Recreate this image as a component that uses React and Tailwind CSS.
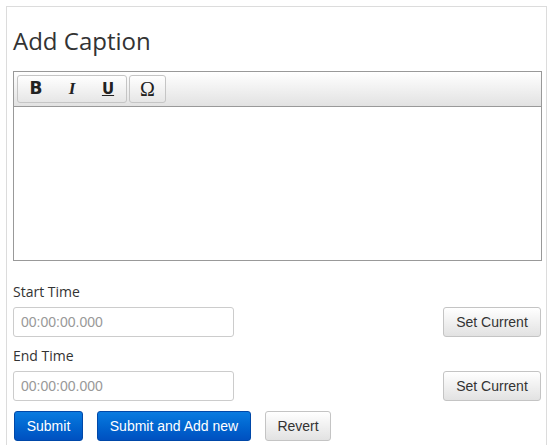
import React from "react";

const grad = "bg-gradient-to-b from-white to-[#e2e2e2]";

export default function App() {
  return (
    <div className="w-[552px] h-[445px] bg-white overflow-hidden">
      <div className="ml-[6px] mt-[6px] w-[541px] h-[460px] border border-[#dcdcdc] border-b-0 pl-[6px] pr-[5px]" style={{ fontFamily: '"Open Sans", sans-serif' }}>
        <h1 className="text-[24px] text-[#333] leading-none mt-[22px] mb-[18px]">Add Caption</h1>
        <div className="w-[529px] h-[190px] border border-[#999] flex flex-col">
          <div className={`h-[35px] border-b border-[#999] ${grad} flex items-center pl-[3px] gap-[2px]`}>
            <div className="flex h-[28px] w-[110px] border border-[#c5c5c5] rounded-[3px] bg-gradient-to-b from-white to-[#e6e6e6]">
              <span className="flex-1 flex items-center justify-center font-bold text-[17px] text-[#222]" style={{ fontFamily: '"DejaVu Sans", sans-serif' }}>B</span>
              <span className="flex-1 flex items-center justify-center italic font-bold text-[17px] text-[#222]" style={{ fontFamily: '"Liberation Serif", serif' }}>I</span>
              <span className="flex-1 flex items-center justify-center text-[15px] font-bold text-[#222] underline" style={{ fontFamily: '"DejaVu Sans", sans-serif' }}>U</span>
            </div>
            <div className="flex h-[28px] w-[37px] items-center justify-center border border-[#c5c5c5] rounded-[3px] bg-gradient-to-b from-white to-[#e6e6e6] text-[20px] text-[#222]" style={{ fontFamily: '"Liberation Serif", serif' }}>Ω</div>
          </div>
          <div className="flex-1 bg-white" />
        </div>
        <div className="text-[14px] text-[#333] mt-[21px] leading-[20px]">Start Time</div>
        <div className="flex justify-between mt-[5px]">
          <div className="w-[221px] h-[30px] border border-[#ccc] rounded-[3px] flex items-center pl-[7px] text-[14px] text-[#999]" style={{ fontFamily: '"Liberation Sans", Arial, sans-serif' }}>00:00:00.000</div>
          <div className={`w-[98px] h-[30px] border border-[#c4c4c4] rounded-[3px] ${grad} flex items-center justify-center text-[14px] text-[#333]`} style={{ fontFamily: '"Liberation Sans", Arial, sans-serif' }}>Set Current</div>
        </div>
        <div className="text-[14px] text-[#333] mt-[9px] leading-[20px]">End Time</div>
        <div className="flex justify-between mt-[5px]">
          <div className="w-[221px] h-[30px] border border-[#ccc] rounded-[3px] flex items-center pl-[7px] text-[14px] text-[#999]" style={{ fontFamily: '"Liberation Sans", Arial, sans-serif' }}>00:00:00.000</div>
          <div className={`w-[98px] h-[30px] border border-[#c4c4c4] rounded-[3px] ${grad} flex items-center justify-center text-[14px] text-[#333]`} style={{ fontFamily: '"Liberation Sans", Arial, sans-serif' }}>Set Current</div>
        </div>
        <div className="flex mt-[10px] text-[14px]" style={{ fontFamily: '"Liberation Sans", Arial, sans-serif' }}>
          <div className="w-[69px] h-[30px] rounded-[3px] bg-gradient-to-b from-[#0a7be0] to-[#0050c0] border border-[#0048a8] text-white flex items-center justify-center ml-[1px]">Submit</div>
          <div className="w-[154px] h-[30px] rounded-[3px] bg-gradient-to-b from-[#0a7be0] to-[#0050c0] border border-[#0048a8] text-white flex items-center justify-center ml-[14px]">Submit and Add new</div>
          <div className={`w-[66px] h-[30px] rounded-[3px] border border-[#c4c4c4] ${grad} text-[#333] flex items-center justify-center ml-[14px]`}>Revert</div>
        </div>
      </div>
    </div>
  );
}
